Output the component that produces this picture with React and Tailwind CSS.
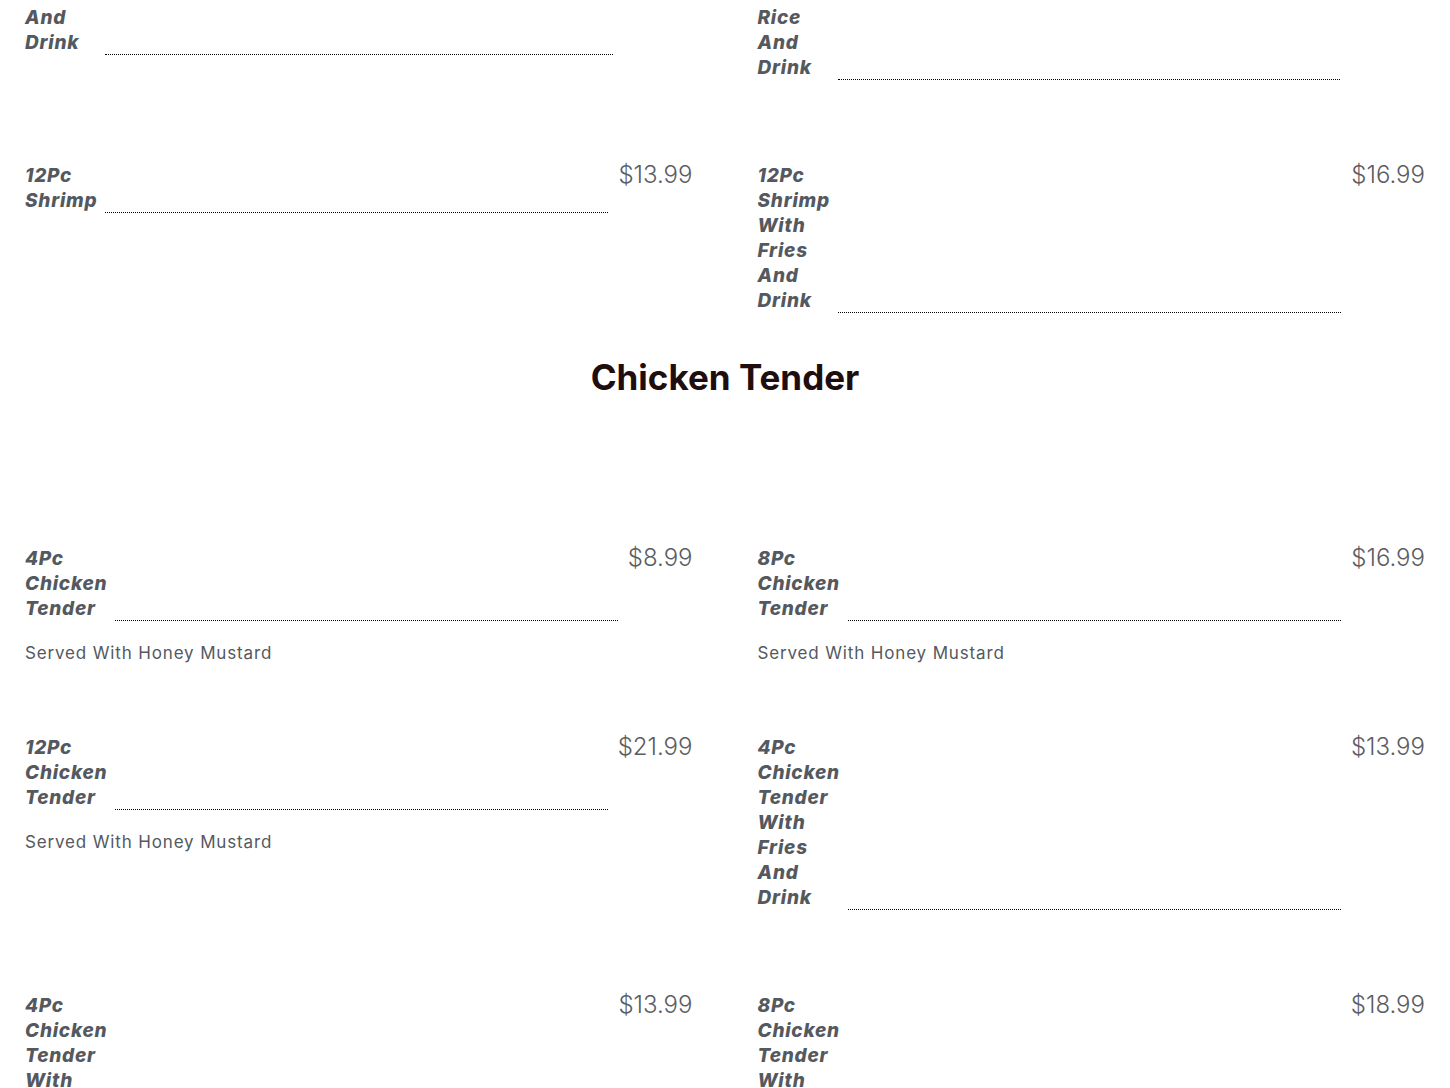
import React from 'react';

// Menu data: each row holds a left and right price-list item
const SHRIMP_ROWS = [
  [
    { title: '6Pc Shrimp With Fries And Drink', price: '$11.99' },
    { title: '6Pc Shrimp With Fried Rice And Drink', price: '$12.99' },
  ],
  [
    { title: '12Pc Shrimp', price: '$13.99' },
    { title: '12Pc Shrimp With Fries And Drink', price: '$16.99' },
  ],
];

const TENDER_ROWS = [
  [
    { title: '4Pc Chicken Tender', price: '$8.99', desc: 'Served With Honey Mustard' },
    { title: '8Pc Chicken Tender', price: '$16.99', desc: 'Served With Honey Mustard' },
  ],
  [
    { title: '12Pc Chicken Tender', price: '$21.99', desc: 'Served With Honey Mustard' },
    { title: '4Pc Chicken Tender With Fries And Drink', price: '$13.99' },
  ],
  [
    { title: '4Pc Chicken Tender With Fried Rice And Drink', price: '$13.99' },
    { title: '8Pc Chicken Tender With Fries And Drink', price: '$18.99' },
  ],
];

const PriceItem = ({ title, price, desc }) => (
  <div>
    <div className="flex items-start">
      <h3 className="w-min shrink-0 text-[19px] leading-[25px] tracking-[0.04em] font-extrabold italic text-[#54595F]">
        {title}
      </h3>
      <span className="flex-1 self-stretch ml-[8px] mr-[10px] border-b border-dotted border-black" />
      <span className="shrink-0 text-[24px] leading-[24px] font-light text-[#5a5d62]">{price}</span>
    </div>
    {desc ? (
      <p className="mt-[19px] text-[17px] leading-[26px] tracking-[0.05em] text-[#54595F]">{desc}</p>
    ) : (
      <div className="h-[14px]" />
    )}
  </div>
);

const PriceGrid = ({ rows }) => (
  <div className="grid grid-cols-2 gap-x-[65px] gap-y-[69px]">
    {rows.flat().map((item, i) => (
      <PriceItem key={i} {...item} />
    ))}
  </div>
);

export default function App() {
  return (
    <div
      className="min-h-screen bg-white px-[25px] overflow-hidden"
      style={{ fontFamily: 'Inter, "Noto Sans", sans-serif' }}
    >
      <div className="mt-[-95px]">
        <PriceGrid rows={SHRIMP_ROWS} />

        <h2 className="mt-[29px] mb-[148px] text-center text-[35px] leading-[42px] font-bold text-[#200E0E]">
          Chicken Tender
        </h2>

        <PriceGrid rows={TENDER_ROWS} />
      </div>
    </div>
  );
}
